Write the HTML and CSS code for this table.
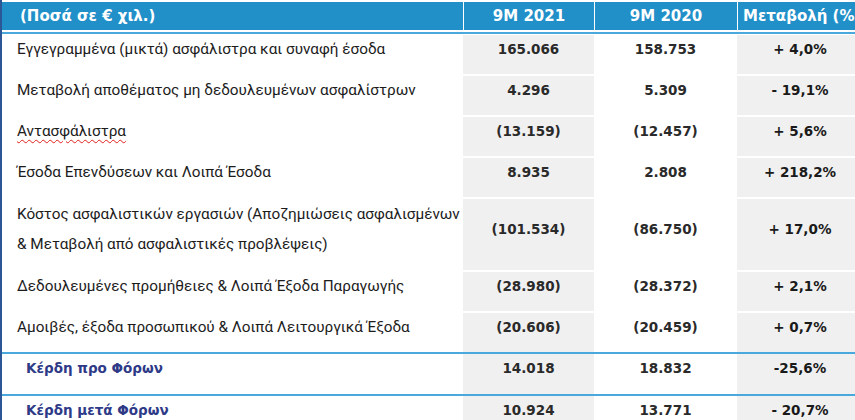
FILE: index.html
```html
<!DOCTYPE html>
<html lang="el">
<head>
<meta charset="utf-8">
<title>Αποτελέσματα 9M 2021</title>
<link rel="stylesheet" href="styles.css">
</head>
<body>
<div class="sheet">
  <div class="row head">
    <div class="c label">(Ποσά σε € χιλ.)</div>
    <div class="c num">9M 2021</div>
    <div class="c num">9M 2020</div>
    <div class="c chg">Μεταβολή (%)</div>
  </div>
  <div class="rule"></div>

  <div class="row">
    <div class="c label">Εγγεγραμμένα (μικτά) ασφάλιστρα και συναφή έσοδα</div>
    <div class="c num shade">165.066</div>
    <div class="c num">158.753</div>
    <div class="c chg shade">+ 4,0%</div>
  </div>
  <div class="row">
    <div class="c label">Μεταβολή αποθέματος μη δεδουλευμένων ασφαλίστρων</div>
    <div class="c num shade">4.296</div>
    <div class="c num">5.309</div>
    <div class="c chg shade">- 19,1%</div>
  </div>
  <div class="row">
    <div class="c label"><span class="spell">Αντασφάλιστρα</span></div>
    <div class="c num shade">(13.159)</div>
    <div class="c num">(12.457)</div>
    <div class="c chg shade">+ 5,6%</div>
  </div>
  <div class="row">
    <div class="c label">Έσοδα Επενδύσεων και Λοιπά Έσοδα</div>
    <div class="c num shade">8.935</div>
    <div class="c num">2.808</div>
    <div class="c chg shade">+ 218,2%</div>
  </div>
  <div class="row tall">
    <div class="c label">Κόστος ασφαλιστικών εργασιών (Αποζημιώσεις ασφαλισμένων<br>&amp; Μεταβολή από ασφαλιστικές προβλέψεις)</div>
    <div class="c num shade">(101.534)</div>
    <div class="c num">(86.750)</div>
    <div class="c chg shade">+ 17,0%</div>
  </div>
  <div class="row">
    <div class="c label">Δεδουλευμένες προμήθειες &amp; Λοιπά Έξοδα Παραγωγής</div>
    <div class="c num shade">(28.980)</div>
    <div class="c num">(28.372)</div>
    <div class="c chg shade">+ 2,1%</div>
  </div>
  <div class="row">
    <div class="c label">Αμοιβές, έξοδα προσωπικού &amp; Λοιπά Λειτουργικά Έξοδα</div>
    <div class="c num shade">(20.606)</div>
    <div class="c num">(20.459)</div>
    <div class="c chg shade">+ 0,7%</div>
  </div>
  <div class="row total">
    <div class="c label">Κέρδη προ Φόρων</div>
    <div class="c num shade">14.018</div>
    <div class="c num">18.832</div>
    <div class="c chg shade">-25,6%</div>
  </div>
  <div class="row total">
    <div class="c label">Κέρδη μετά Φόρων</div>
    <div class="c num shade">10.924</div>
    <div class="c num">13.771</div>
    <div class="c chg shade">- 20,7%</div>
  </div>
</div>
</body>
</html>
```

FILE: styles.css
```css
html, body {
  margin: 0;
  padding: 0;
  background: #ffffff;
  overflow: hidden;
}

.sheet {
  width: 853px;
  height: 420px;
  border-left: 2px solid #2b5797;
  padding-top: 2px;
  box-sizing: content-box;
}

.row {
  display: grid;
  grid-template-columns: 461px 131px 143px 118px;
  margin-bottom: 2px;
}

.c {
  display: flex;
  align-items: center;
  height: 28px;
  padding-bottom: 11px;
  line-height: 28px;
  white-space: nowrap;
  overflow: hidden;
}

.label {
  padding-left: 15px;
  font-family: Roboto, "Open Sans", sans-serif;
  font-size: 15.3px;
  color: #1c1c1c;
}

.num {
  justify-content: center;
  font-family: "DejaVu Sans", Verdana, sans-serif;
  font-weight: bold;
  font-size: 13.5px;
  color: #2a2a2a;
}

.chg {
  justify-content: center;
  padding-left: 8px;
  font-family: "DejaVu Sans", Verdana, sans-serif;
  font-weight: bold;
  font-size: 13.5px;
  color: #1a1a1a;
}

.shade {
  background: #f0f0f0;
}

.head {
  margin-bottom: 2px;
  background: #2190c9;
}

.head .c {
  height: 28px;
  padding-bottom: 0;
  color: #ffffff;
  font-family: "DejaVu Sans", Verdana, sans-serif;
  font-weight: bold;
  font-size: 15px;
}

.head .label {
  padding-left: 18px;
}

.head .num,
.head .chg {
  border-left: 1px solid #ffffff;
}

.head .chg {
  justify-content: flex-start;
  padding-left: 5px;
}

.rule {
  height: 2px;
  background: #4aa8dc;
  margin-bottom: 1px;
}

.tall .c {
  height: 60px;
  padding-bottom: 11px;
}

.tall .label {
  white-space: normal;
  line-height: 30px;
  align-items: flex-start;
}

.spell {
  text-decoration: underline wavy #e0201c;
  text-decoration-thickness: 1px;
  text-underline-offset: 3px;
}

.total {
  border-top: 2px solid #4aa8dc;
  margin-top: -2px;
}

.total .c {
  padding-bottom: 12px;
}

.total .label {
  padding-left: 24px;
  font-family: "DejaVu Sans", Verdana, sans-serif;
  font-weight: bold;
  font-size: 13.5px;
  color: #2e3a87;
}
```
